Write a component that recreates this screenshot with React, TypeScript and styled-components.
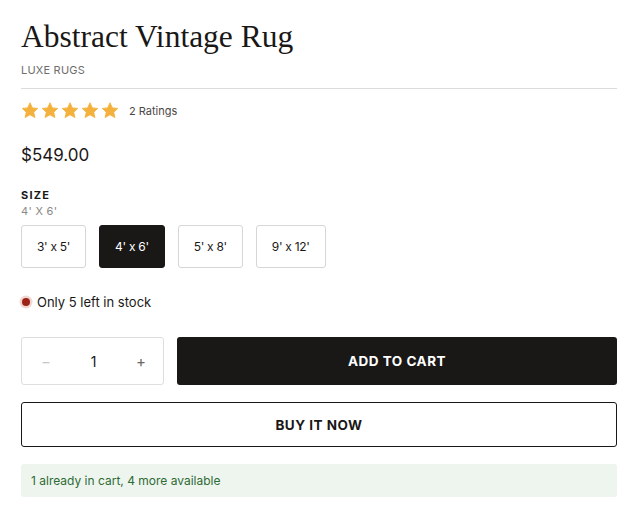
import React, { useState } from "react";
import styled, { createGlobalStyle } from "styled-components";

const GlobalStyle = createGlobalStyle`
  body {
    margin: 0;
    background: #ffffff;
    font-family: Inter, "Noto Sans", "Liberation Sans", sans-serif;
    color: #1a1817;
  }
`;

const sizes = ["3' x 5'", "4' x 6'", "5' x 8'", "9' x 12'"];

const Star = () => (
  <svg width="18" height="17" viewBox="0 0 24 23">
    <path
      d="M12 1l3.2 7 7.3.7-5.5 5 1.6 7.3L12 17.3 5.4 21l1.6-7.3-5.5-5 7.3-.7z"
      fill="#f4b13d"
      stroke="#f4b13d"
      strokeWidth="1.2"
      strokeLinejoin="round"
    />
  </svg>
);

export default function App() {
  const [size, setSize] = useState(1);
  const [qty, setQty] = useState(1);

  return (
    <>
      <GlobalStyle />
      <ProductInfo>
        <Title>Abstract Vintage Rug</Title>
        <Vendor>LUXE RUGS</Vendor>
        <Divider />
        <RatingRow>
          <Stars>
            {[0, 1, 2, 3, 4].map((i) => (
              <Star key={i} />
            ))}
          </Stars>
          <RatingCount>2 Ratings</RatingCount>
        </RatingRow>
        <Price>$549.00</Price>
        <OptionLabel>SIZE</OptionLabel>
        <OptionValue>{sizes[size].toUpperCase()}</OptionValue>
        <SizeList>
          {sizes.map((s, i) => (
            <SizeButton key={s} $active={i === size} onClick={() => setSize(i)}>
              {s}
            </SizeButton>
          ))}
        </SizeList>
        <Stock>
          <StockDot />
          Only 5 left in stock
        </Stock>
        <BuyRow>
          <Quantity>
            <QtyButton $muted onClick={() => setQty(Math.max(1, qty - 1))}>
              −
            </QtyButton>
            <QtyValue>{qty}</QtyValue>
            <QtyButton onClick={() => setQty(qty + 1)}>+</QtyButton>
          </Quantity>
          <AddToCart>ADD TO CART</AddToCart>
        </BuyRow>
        <BuyNow>BUY IT NOW</BuyNow>
        <CartNotice>1 already in cart, 4 more available</CartNotice>
      </ProductInfo>
    </>
  );
}

const ProductInfo = styled.div`
  display: flex;
  flex-direction: column;
  width: 596px;
  padding: 17px 0 0 21px;
`;

const Title = styled.h1`
  margin: 0;
  font-family: "Liberation Serif", "DejaVu Serif", serif;
  font-weight: 400;
  font-size: 31.5px;
  line-height: 40px;
  color: #1a1817;
`;

const Vendor = styled.div`
  margin-top: 6px;
  font-size: 11px;
  line-height: 14px;
  color: #6f6d6b;
  letter-spacing: 0.2px;
`;

const Divider = styled.hr`
  margin: 11px 0 0;
  border: 0;
  border-top: 1px solid #dcdcdc;
`;

const RatingRow = styled.div`
  display: flex;
  align-items: center;
  gap: 10px;
  margin-top: 13px;
`;

const Stars = styled.div`
  display: flex;
  gap: 2px;
`;

const RatingCount = styled.span`
  font-size: 11px;
  color: #4a4846;
`;

const Price = styled.div`
  margin-top: 25px;
  font-size: 17px;
  line-height: 22px;
`;

const OptionLabel = styled.div`
  margin-top: 21px;
  font-size: 11px;
  line-height: 16px;
  font-weight: 700;
  letter-spacing: 1.2px;
`;

const OptionValue = styled.div`
  font-size: 11px;
  line-height: 16px;
  color: #8a8886;
  letter-spacing: 0.3px;
`;

const SizeList = styled.div`
  display: flex;
  gap: 13px;
  margin-top: 6px;
`;

const SizeButton = styled.button<{ $active?: boolean }>`
  height: 43px;
  padding: 0 15px;
  border-radius: 3px;
  border: 1px solid ${(p) => (p.$active ? "#1a1817" : "#d6d6d6")};
  background: ${(p) => (p.$active ? "#1a1817" : "#ffffff")};
  color: ${(p) => (p.$active ? "#ffffff" : "#1a1817")};
  font-family: inherit;
  font-size: 12px;
  letter-spacing: -0.3px;
  cursor: pointer;
`;

const Stock = styled.div`
  display: flex;
  align-items: center;
  gap: 7px;
  margin-top: 25px;
  font-size: 13px;
  line-height: 18px;
`;

const StockDot = styled.span`
  width: 8px;
  height: 8px;
  border-radius: 50%;
  background: #9b2318;
  box-shadow: 0 0 0 2.5px #f2d6d2;
  margin-left: 1px;
`;

const BuyRow = styled.div`
  display: flex;
  gap: 13px;
  margin-top: 26px;
`;

const Quantity = styled.div`
  display: flex;
  align-items: center;
  justify-content: space-between;
  width: 143px;
  height: 48px;
  box-sizing: border-box;
  border: 1px solid #dedede;
  border-radius: 3px;
  padding: 0 6px 0 8px;
`;

const QtyButton = styled.button<{ $muted?: boolean }>`
  width: 32px;
  border: 0;
  background: none;
  font-family: inherit;
  font-size: 15px;
  color: ${(p) => (p.$muted ? "#c8c8c8" : "#6a6866")};
  cursor: pointer;
`;

const QtyValue = styled.span`
  font-size: 14px;
`;

const AddToCart = styled.button`
  flex: 1;
  height: 48px;
  border: 0;
  border-radius: 3px;
  background: #1a1817;
  color: #ffffff;
  font-family: inherit;
  font-weight: 700;
  font-size: 13.5px;
  letter-spacing: 0.5px;
  cursor: pointer;
`;

const BuyNow = styled.button`
  margin-top: 17px;
  height: 45px;
  border: 1px solid #1a1817;
  border-radius: 3px;
  background: #ffffff;
  color: #1a1817;
  font-family: inherit;
  font-weight: 700;
  font-size: 13.5px;
  letter-spacing: 0.5px;
  cursor: pointer;
`;

const CartNotice = styled.div`
  margin-top: 17px;
  padding: 9px 10px 8px;
  border-radius: 3px;
  background: #eef5ef;
  color: #2e6b34;
  font-size: 12px;
  line-height: 16px;
`;
